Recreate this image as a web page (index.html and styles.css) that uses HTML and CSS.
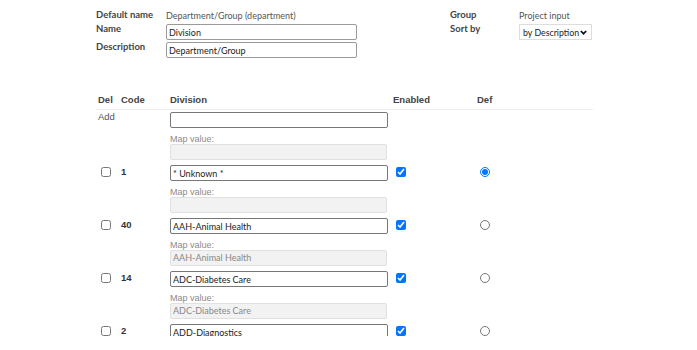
FILE: index.html
```html
<!DOCTYPE html>
<html lang="en">
<head>
    <meta charset="UTF-8">
    <meta name="viewport" content="width=device-width, initial-scale=1.0">
    <title>Division</title>
    <link rel="stylesheet" href="styles.css">
</head>
<body>
    <div class="page">
        <div class="header-form">
            <div class="lbl first">Default name</div>
            <div class="val">Department/Group (department)</div>
            <div class="spacer"></div>
            <div class="lbl first">Group</div>
            <div class="val">Project input</div>

            <div class="lbl">Name</div>
            <div><input type="text" class="txt" value="Division"></div>
            <div class="spacer"></div>
            <div class="lbl">Sort by</div>
            <div>
                <div class="select">by Description
                    <svg width="7" height="5" viewBox="0 0 7 5"><path d="M0.8 1 L3.5 3.7 L6.2 1" fill="none" stroke="#111" stroke-width="1.7"/></svg>
                </div>
            </div>

            <div class="lbl">Description</div>
            <div><input type="text" class="txt" value="Department/Group"></div>
        </div>

        <div class="grid">
            <div class="th">Del</div>
            <div class="th">Code</div>
            <div class="th">Division</div>
            <div class="th">Enabled</div>
            <div class="th">Def</div>
            <div class="rule"></div>

            <div class="cell add">Add</div>
            <div class="cell"></div>
            <div class="cell">
                <input type="text" class="name-input">
                <div class="map-label">Map value:</div>
                <div class="map-box"></div>
            </div>
            <div class="cell"></div>
            <div class="cell"></div>

            <div class="cell"><input type="checkbox" class="chk"></div>
            <div class="cell code">1</div>
            <div class="cell">
                <input type="text" class="name-input" value="* Unknown *">
                <div class="map-label">Map value:</div>
                <div class="map-box"></div>
            </div>
            <div class="cell"><input type="checkbox" class="chk" checked></div>
            <div class="cell"><input type="radio" name="def" class="rad" checked></div>

            <div class="cell"><input type="checkbox" class="chk"></div>
            <div class="cell code">40</div>
            <div class="cell">
                <input type="text" class="name-input" value="AAH-Animal Health">
                <div class="map-label">Map value:</div>
                <div class="map-box">AAH-Animal Health</div>
            </div>
            <div class="cell"><input type="checkbox" class="chk" checked></div>
            <div class="cell"><input type="radio" name="def" class="rad"></div>

            <div class="cell"><input type="checkbox" class="chk"></div>
            <div class="cell code">14</div>
            <div class="cell">
                <input type="text" class="name-input" value="ADC-Diabetes Care">
                <div class="map-label">Map value:</div>
                <div class="map-box">ADC-Diabetes Care</div>
            </div>
            <div class="cell"><input type="checkbox" class="chk" checked></div>
            <div class="cell"><input type="radio" name="def" class="rad"></div>

            <div class="cell"><input type="checkbox" class="chk"></div>
            <div class="cell code">2</div>
            <div class="cell">
                <input type="text" class="name-input" value="ADD-Diagnostics">
                <div class="map-label">Map value:</div>
                <div class="map-box">ADD-Diagnostics</div>
            </div>
            <div class="cell"><input type="checkbox" class="chk" checked></div>
            <div class="cell"><input type="radio" name="def" class="rad"></div>
        </div>
    </div>
</body>
</html>
```

FILE: styles.css
```css
body {
    margin: 0;
    background: #fff;
    font-family: 'Lato', sans-serif;
    color: #333;
    height: 350px;
    overflow: hidden;
}

/* the frame ends before the window does */
.page {
    box-sizing: border-box;
    height: 336px;
    overflow: hidden;
    padding: 8px 0 0 96px;
    width: 593px;
}

/* top form */
.header-form {
    display: grid;
    grid-template-columns: 70px 191px 93px 69px auto;
    grid-template-rows: 16px 18px 16px;
    align-items: start;
}

.lbl {
    font-weight: bold;
    font-size: 9.5px;
    color: #444;
    line-height: 10px;
}

.lbl.first {
    padding-top: 2px;
}

.val {
    font-size: 9px;
    color: #555;
    line-height: 16px;
    white-space: nowrap;
}

.txt {
    display: block;
    box-sizing: border-box;
    width: 191px;
    height: 16px;
    margin: 0;
    padding: 0 2px;
    border: 1px solid #9a9a9a;
    border-radius: 2px;
    font-family: 'Lato', sans-serif;
    font-size: 9px;
    color: #222;
}

.select {
    box-sizing: border-box;
    display: flex;
    align-items: center;
    justify-content: space-between;
    width: 73px;
    height: 16px;
    padding: 0 4px 0 3px;
    border: 1px solid #ddd;
    font-size: 8.8px;
    color: #222;
    white-space: nowrap;
}

/* table */
.grid {
    margin-top: 37px;
    display: grid;
    grid-template-columns: 23px 49px 223px 84px auto;
}

.th {
    font-family: 'Liberation Sans', Arial, sans-serif;
    font-weight: bold;
    font-size: 9.5px;
    color: #444;
    line-height: 10px;
    padding: 0 0 4px 2px;
}

.rule {
    grid-column: 1 / -1;
    border-top: 1px solid #eee;
    margin-bottom: 2px;
}

.cell {
    padding: 0 0 5px 2px;
    font-family: 'Liberation Sans', Arial, sans-serif;
    font-size: 9.5px;
}

.add {
    color: #555;
    line-height: 10px;
}

.code {
    font-weight: bold;
    color: #333;
    line-height: 13px;
}

.name-input {
    display: block;
    box-sizing: border-box;
    width: 218px;
    height: 16px;
    margin: 0;
    padding: 0 2px;
    border: 1px solid #777;
    border-radius: 2px;
    font-family: 'Lato', sans-serif;
    font-size: 9px;
    color: #222;
}

.map-label {
    height: 11px;
    padding-top: 5px;
    line-height: 12px;
    font-size: 9px;
    color: #8a8a8a;
}

.map-box {
    box-sizing: border-box;
    width: 217px;
    height: 16px;
    padding: 0 2px;
    background: #f2f2f2;
    border: 1px solid #e0e0e0;
    border-radius: 2px;
    font-family: 'Lato', sans-serif;
    font-size: 9px;
    line-height: 14px;
    color: #888;
}

.chk, .rad {
    width: 10px;
    height: 10px;
    margin: 2px 0 0 3px;
}
```
